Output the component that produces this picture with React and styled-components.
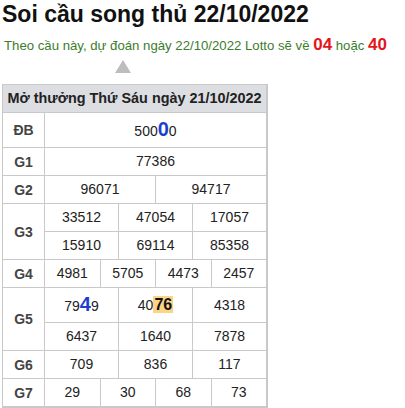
import React from 'react';
import styled, { createGlobalStyle } from 'styled-components';

const GlobalStyle = createGlobalStyle`
  body {
    margin: 0;
    background: #fff;
    font-family: "Liberation Sans", Arial, sans-serif;
  }
`;

const Page = styled.div`
  width: 405px;
  padding: 0 2px;
  box-sizing: border-box;
`;

const Title = styled.h1`
  font-size: 23px;
  font-weight: bold;
  color: #111;
  margin: 1px 0 0;
  line-height: 26px;
`;

const Predict = styled.p`
  margin: 9px 0 0 2px;
  font-size: 13.2px;
  color: #3b7d2b;
  line-height: 18px;
  height: 18px;
`;

const Hot = styled.b`
  color: #e3161c;
  font-size: 17px;
  line-height: 1;
`;

const Arrow = styled.div`
  width: 0;
  height: 0;
  margin: 6px 0 0 113px;
  border-left: 8px solid transparent;
  border-right: 8px solid transparent;
  border-bottom: 13px solid #bdbdbd;
`;

const Table = styled.div`
  margin-top: 11px;
  width: 266px;
  display: grid;
  grid-template-columns: 41px repeat(12, 1fr);
  gap: 1px;
  background: #c9c9c9;
  border: 1px solid #c9c9c9;
  border-right-width: 2px;
  border-bottom-width: 2px;
  box-sizing: border-box;
`;

const Head = styled.div`
  grid-column: 1 / -1;
  background: #dcdee2;
  color: #222;
  font-weight: bold;
  font-size: 14.4px;
  line-height: 16px;
  text-align: center;
  padding: 5px 0 6px;
`;

const Label = styled.div`
  grid-row: span ${(p) => p.$rows || 1};
  background: #fff;
  color: #444;
  font-weight: bold;
  font-size: 14px;
  display: flex;
  align-items: center;
  justify-content: center;
`;

const Cell = styled.div`
  grid-column: span ${(p) => p.$span};
  background: #fff;
  color: #222;
  font-size: 14px;
  line-height: 16px;
  text-align: center;
  padding: 5px 0 6px;
  display: flex;
  align-items: center;
  justify-content: center;
`;

const Big = styled.b`
  color: #1d3fd0;
  font-size: 20px;
  line-height: 23px;
`;

const Mark = styled.b`
  background: #fdd386;
  color: #111;
  font-size: 16px;
  line-height: 23px;
  padding: 0 1px;
`;

const rows = [
  { label: 'G1', values: ['77386'] },
  { label: 'G2', values: ['96071', '94717'] },
  { label: 'G3', values: ['33512', '47054', '17057', '15910', '69114', '85358'], per: 3 },
  { label: 'G4', values: ['4981', '5705', '4473', '2457'] },
];

const tail = [
  { label: 'G6', values: ['709', '836', '117'] },
  { label: 'G7', values: ['29', '30', '68', '73'] },
];

const Group = ({ label, values, per }) => {
  const cols = per || values.length;
  const lines = values.length / cols;
  return (
    <>
      <Label $rows={lines}>{label}</Label>
      {values.map((v, i) => (
        <Cell key={i} $span={12 / cols}>{v}</Cell>
      ))}
    </>
  );
};

export default function App() {
  return (
    <Page>
      <GlobalStyle />
      <Title>Soi cầu song thủ 22/10/2022</Title>
      <Predict>
        Theo cầu này, dự đoán ngày 22/10/2022 Lotto sẽ về <Hot>04</Hot> hoặc <Hot>40</Hot>
      </Predict>
      <Arrow />
      <Table>
        <Head>Mở thưởng Thứ Sáu ngày 21/10/2022</Head>
        <Label>ĐB</Label>
        <Cell $span={12}>
          <span>500<Big>0</Big>0</span>
        </Cell>
        {rows.map((r) => (
          <Group key={r.label} {...r} />
        ))}
        <Label $rows={2}>G5</Label>
        <Cell $span={4}>
          <span>79<Big>4</Big>9</span>
        </Cell>
        <Cell $span={4}>
          <span>40<Mark>76</Mark></span>
        </Cell>
        <Cell $span={4}>4318</Cell>
        <Cell $span={4}>6437</Cell>
        <Cell $span={4}>1640</Cell>
        <Cell $span={4}>7878</Cell>
        {tail.map((r) => (
          <Group key={r.label} {...r} />
        ))}
      </Table>
    </Page>
  );
}
